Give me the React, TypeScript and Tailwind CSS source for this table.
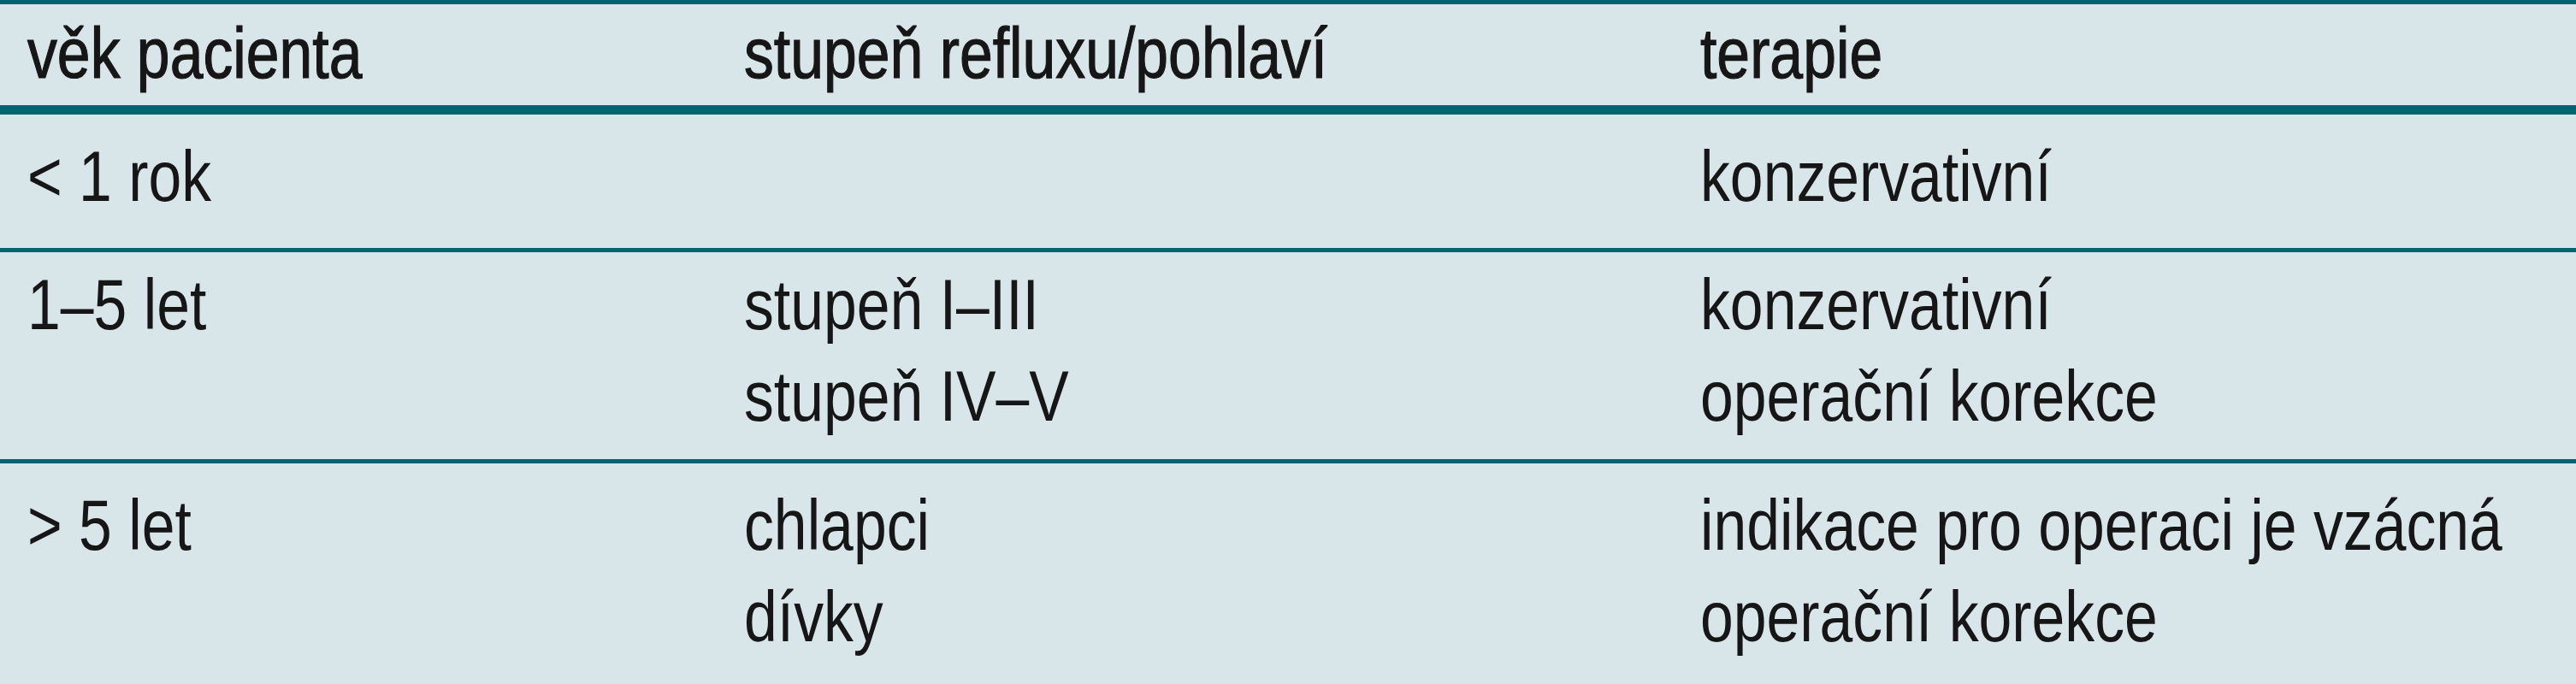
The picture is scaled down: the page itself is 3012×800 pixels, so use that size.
import React from "react";

// rows of the reflux therapy table
interface RowType {
  age: string;
  grade: string[];
  therapy: string[];
  pad: string;
}

const rows: RowType[] = [
  { age: "< 1 rok", grade: [], therapy: ["konzervativní"], pad: "pt-[19px] pb-[30px]" },
  {
    age: "1–5 let",
    grade: ["stupeň I–III", "stupeň IV–V"],
    therapy: ["konzervativní", "operační korekce"],
    pad: "pt-[8px] pb-[20px]",
  },
  {
    age: "> 5 let",
    grade: ["chlapci", "dívky"],
    therapy: ["indikace pro operaci je vzácná", "operační korekce"],
    pad: "pt-[19px] pb-[25px]",
  },
];

// the font in the table is a narrow grotesque, squeeze it
const Txt = ({ children }: { children: React.ReactNode }) => (
  <div className="whitespace-nowrap origin-left scale-x-[0.84]">{children}</div>
);

const App = () => {
  return (
    <div
      className="w-[3012px] h-[800px] overflow-hidden bg-[#d9e6e9] text-[#161616] text-[83px] leading-[107px] border-t-[5px] border-[#006570]"
      style={{ fontFamily: '"Liberation Sans", Arial, sans-serif' }}
    >
      <div className="grid grid-cols-[838px_1118px_1fr] pl-[32px] pt-[4px] pb-[7px] border-b-[11px] border-[#006570] [-webkit-text-stroke:1.2px_#161616]">
        <Txt>věk pacienta</Txt>
        <Txt>stupeň refluxu/pohlaví</Txt>
        <Txt>terapie</Txt>
      </div>
      {rows.map((row, i) => (
        <div
          key={i}
          className={
            "grid grid-cols-[838px_1118px_1fr] pl-[32px] " +
            row.pad +
            (i < rows.length - 1 ? " border-b-[5px] border-[#006570]" : "")
          }
        >
          <Txt>{row.age}</Txt>
          <div>
            {row.grade.map((g, j) => (
              <Txt key={j}>{g}</Txt>
            ))}
          </div>
          <div>
            {row.therapy.map((t, j) => (
              <Txt key={j}>{t}</Txt>
            ))}
          </div>
        </div>
      ))}
    </div>
  );
};

export default App;
